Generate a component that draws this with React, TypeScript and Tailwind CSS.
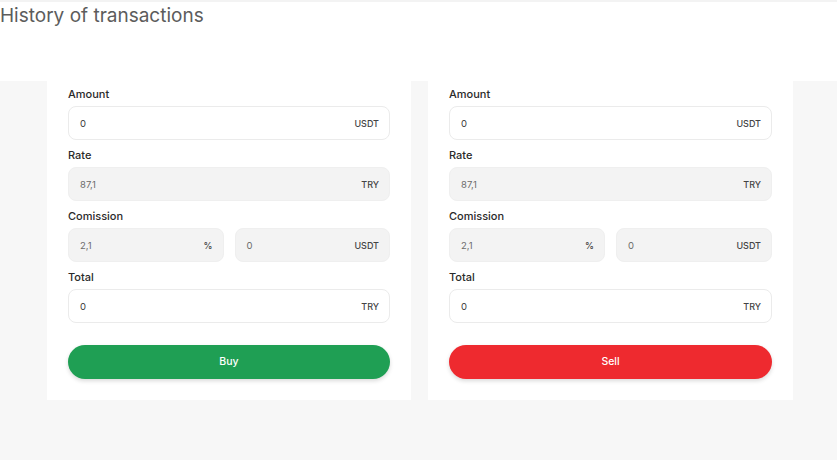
import React from "react";

const font = { fontFamily: "Inter, 'Noto Sans', sans-serif" };

function Field({
  value,
  suffix,
  filled,
  grow,
}: {
  value: string;
  suffix: string;
  filled?: boolean;
  grow?: boolean;
}) {
  return (
    <div
      className={
        "h-[34px] shrink-0 rounded-[8px] border flex items-center justify-between pl-[11px] pr-[10px] " +
        (grow ? "flex-1 " : "w-full ") +
        (filled
          ? "bg-[#f3f3f3] border-[#efefef] text-[#6b6b6b]"
          : "bg-white border-[#ebebeb] text-[#3a3a3a]")
      }
    >
      <span className="text-[9.5px] leading-none pt-[1px]">{value}</span>
      <span className="text-[9px] font-medium text-[#444] leading-none pt-[1px]">{suffix}</span>
    </div>
  );
}

function Label({ children }: { children: React.ReactNode }) {
  return (
    <div className="h-[16px] leading-[16px] text-[11px] font-medium text-[#2a2a2a] mb-[4px] shrink-0">
      {children}
    </div>
  );
}

function Card({ kind }: { kind: "buy" | "sell" }) {
  return (
    <div className="bg-white h-[319px] pt-[5px] px-[21px] flex flex-col">
      <Label>Amount</Label>
      <Field value="0" suffix="USDT" />
      <div className="h-[7px] shrink-0" />
      <Label>Rate</Label>
      <Field value="87,1" suffix="TRY" filled />
      <div className="h-[7px] shrink-0" />
      <Label>Comission</Label>
      <div className="flex gap-[11px] shrink-0">
        <Field value="2,1" suffix="%" filled grow />
        <Field value="0" suffix="USDT" filled grow />
      </div>
      <div className="h-[7px] shrink-0" />
      <Label>Total</Label>
      <Field value="0" suffix="TRY" />
      <button
        className={
          "mt-[22px] h-[34px] shrink-0 rounded-full text-white text-[10.5px] font-medium shadow-[0_2px_4px_rgba(0,0,0,0.15)] " +
          (kind === "buy" ? "bg-[#1f9f54]" : "bg-[#ee2a2f]")
        }
      >
        {kind === "buy" ? "Buy" : "Sell"}
      </button>
    </div>
  );
}

export default function App() {
  return (
    <div className="w-[840px] h-[460px] bg-white flex flex-col overflow-hidden" style={font}>
      <div className="h-[2px] bg-[#f3f3f3] mr-[3px]" />
      <div className="h-[79px]">
        <div className="text-[19px] leading-[28px] text-[#5c5c5c]">
          History of transactions
        </div>
      </div>
      <div className="flex-1 bg-[#f7f7f7] mr-[3px] flex items-start pl-[47px] gap-[17px]">
        <div className="w-[364px]">
          <Card kind="buy" />
        </div>
        <div className="w-[365px]">
          <Card kind="sell" />
        </div>
      </div>
    </div>
  );
}
